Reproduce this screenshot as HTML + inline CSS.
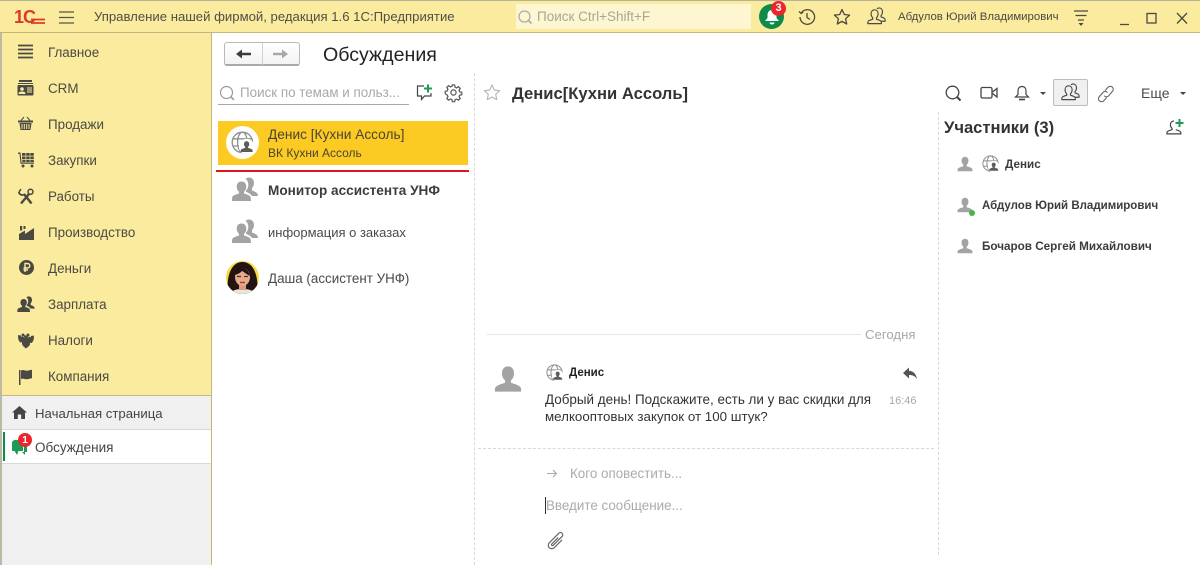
<!DOCTYPE html>
<html lang="ru"><head><meta charset="utf-8"><title>Обсуждения</title>
<style>
html,body{margin:0;padding:0;background:#fff}
#p{position:relative;width:1200px;height:565px;overflow:hidden;background:#fff;font-family:"Liberation Sans",sans-serif;color:#333}
#p div,#p svg{position:absolute}
.t{white-space:nowrap;line-height:16px;height:16px}
.m{font-size:13.4px;color:#4a4a42;left:48px}
.ms{font-size:11.7px;font-weight:bold;color:#3c3c3c}
.b{font-weight:bold}
svg{overflow:visible}
</style></head><body><div id="p">
<svg width="0" height="0" style="left:0;top:0"><defs>
<symbol id="u1" viewBox="0 0 20 20"><path d="M10 1c3 0 4.300 2.300 4.300 5 0 2.400-1 4-2.200 5v1.800c2.800.8 6 1.800 6.900 3.200.4.700.4 2 .4 3H.6c0-1 0-2.300.4-3 .9-1.400 4.100-2.400 6.900-3.200V11C6.700 10 5.700 8.400 5.700 6c0-2.700 1.300-5 4.300-5z"/></symbol>
<symbol id="uu" viewBox="0 0 26 24"><path d="M13 2.500c1-1.200 2.500-2 4-2 3.500 0 5 2.700 5 5.500 0 2.300-1 4-2 5v2.500c2 .7 4.500 1.600 5.300 3 .4.600.7 1.500.7 2.500h-6c-1.200-2-3.500-3.300-6-4.300v-1c1.500-1.500 2.300-3.500 2.300-6 0-2-.8-4.200-2.300-5.700z"/><path d="M9.500 4.500c3.300 0 4.800 2.400 4.800 5.200 0 2.300-1 4-2.300 5v1.800c2.700.8 5.500 1.800 6.300 3 .4.700.7 2.500.7 4.500H0c0-2 .1-3.800.5-4.500 1-1.200 3.800-2.200 6.500-3v-1.800c-1.300-1-2.300-2.700-2.300-5 0-2.800 1.500-5.200 4.800-5.200z"/></symbol>
<symbol id="glob" viewBox="0 0 20 20"><g fill="none" stroke="#8f8f8f" stroke-width="1.100"><circle cx="9.500" cy="9.500" r="8.500"/><ellipse cx="9.500" cy="9.500" rx="4" ry="8.500"/><path d="M1.500 6.500h16M1.500 12.500h7"/></g><circle cx="13" cy="13" r="6.500" fill="#fff"/><path d="M13 8.500c1.500 0 2.200 1.100 2.200 2.500 0 1-.5 1.800-1 2.300v.8c1.500.4 3.300 1 3.600 1.600.2.500.2 1.300.2 1.800H8c0-.5 0-1.300.2-1.800.3-.6 2.100-1.200 3.600-1.600v-.8c-.5-.5-1-1.300-1-2.300 0-1.400.7-2.500 2.200-2.500z" fill="#5c5c5c"/></symbol>
<symbol id="out" viewBox="0 0 20 20"><g fill="none" stroke="#4a4a4a" stroke-width="1.200" stroke-linejoin="round"><path d="M10.500 2c.6-.6 1.300-1 2.300-1 2.400 0 3.500 2 3.500 4.200 0 1.800-.7 3-1.500 3.800v1.500c1.700.5 3.500 1.200 4 2 .3.500.3 1.400.3 2.500h-4"/><path d="M8 3c2.500 0 3.700 2 3.700 4.300 0 1.900-.8 3.200-1.700 4v1.700c2.300.6 4.300 1.300 4.800 2.200.3.500.4 1.300.4 2.300H.8c0-1 .1-1.800.4-2.300.5-.9 2.500-1.600 4.800-2.200v-1.700c-.9-.8-1.700-2.100-1.700-4C4.300 5 5.500 3 8 3z"/></g></symbol>
</defs></svg>

<!-- Header -->
<div style="left:0;top:0;width:1200px;height:33px;background:#fbeb9e;border-top:1px solid #b5b29c;border-bottom:1px solid #c2b77b;box-sizing:border-box"></div>
<svg style="left:30px;top:18px" width="15" height="8"><path d="M1 1.500h14M1 5h14" stroke="#dd3b28" stroke-width="1.700" fill="none"/></svg>
<div class="t b" style="left:14px;top:6px;font-size:18px;line-height:22px;height:22px;color:#dd3b28;letter-spacing:-1px">1С</div>
<svg style="left:59px;top:11px" width="15" height="13"><path d="M0 1h15M0 6.500h15M0 12h15" stroke="#55554a" stroke-width="1.300"/></svg>
<div class="t" style="left:94px;top:9px;font-size:13.15px;color:#4f4f45">Управление нашей фирмой, редакция 1.6 1С:Предприятие</div>
<div style="left:516px;top:4px;width:235px;height:25px;background:#fdf6d0"></div>
<svg style="left:517px;top:9px" width="16" height="16" fill="none" stroke="#aaa" stroke-width="1.200"><circle cx="7.500" cy="7.500" r="5.500"/><path d="M11.500 11.500l3 3" stroke-width="1.600"/></svg>
<div class="t" style="left:537px;top:9px;font-size:13.5px;color:#a9a794">Поиск Ctrl+Shift+F</div>
<div style="left:759px;top:4px;width:25px;height:25px;border-radius:50%;background:#0e8a4a"></div>
<svg style="left:764px;top:9px" width="16" height="16" fill="#fff"><path d="M8 1c3 0 4.500 2.300 4.500 5v3l2.500 3H1l2.500-3V6C3.500 3.300 5 1 8 1z"/><path d="M5.500 13.500h5a2.500 2 0 0 1-5 0z"/></svg>
<div class="t b" style="left:771px;top:1px;width:15px;height:15px;border-radius:50%;background:#e8262b;color:#fff;font-size:11px;line-height:15px;text-align:center">3</div>
<svg style="left:798px;top:8px" width="18" height="18" fill="none" stroke="#4a4a42" stroke-width="1.300"><path d="M3.200 5A7.300 7.300 0 1 1 2 9"/><path d="M1 3.500l2.200 2 2-1.600"/><path d="M9 5v4.500l3 2"/></svg>
<svg style="left:833px;top:8px" width="18" height="18" fill="none" stroke="#4a4a42" stroke-width="1.300" stroke-linejoin="round"><path d="M9 1.500l2.300 5 5.300.6-4 3.600 1.100 5.300L9 13.300 4.300 16l1.100-5.300-4-3.600 5.300-.6z"/></svg>
<svg style="left:867px;top:7px" width="19" height="19"><use href="#out" width="19" height="19"/></svg>
<div class="t" style="left:898px;top:9px;font-size:11.4px;color:#4a4a42">Абдулов Юрий Владимирович</div>
<svg style="left:1073px;top:10px" width="16" height="16"><path d="M1 1h14M2.500 5.500h11M5 10h6" stroke="#4a4a42" stroke-width="1.300"/><path d="M5.500 13h5L8 16z" fill="#4a4a42"/></svg>
<svg style="left:1120px;top:12px" width="68" height="14" fill="none" stroke="#4a4a42" stroke-width="1.300"><path d="M0 12.500h9"/><rect x="27" y="1.500" width="9" height="9.500"/><path d="M57 1l10 10.500M67 1L57 11.500"/></svg>

<!-- Sidebar -->
<div style="left:0;top:33px;width:212px;height:532px;background:#fbeb9e;border-left:2px solid #bdbaa4;border-right:1px solid #c2b77b;box-sizing:border-box"></div>
<svg style="left:18px;top:44px" width="15" height="15"><path d="M0 1.500h15M0 5.500h15M0 9.500h15M0 13.500h15" stroke="#4a4a42" stroke-width="1.700"/></svg>
<div class="t m" style="top:45px">Главное</div>
<svg style="left:17px;top:79px" width="17" height="17"><path d="M2 1h13v2H2zM1 4h15v1H1z" fill="#4a4a42"/><rect x="0.500" y="6" width="16" height="10.500" rx="1" fill="#4a4a42"/><circle cx="5" cy="10" r="1.800" fill="#fbeb9e"/><path d="M2 14.500c0-2 6-2 6 0zM10 9h5M10 11h5M10 13h5" fill="#fbeb9e" stroke="#fbeb9e" stroke-width=".9"/></svg>
<div class="t m" style="top:81px">CRM</div>
<svg style="left:18px;top:116px" width="15" height="15"><path d="M0 4.500h15v2H0z" fill="#4a4a42"/><path d="M1.500 7h12l-1 7h-10z" fill="#4a4a42"/><path d="M4 8v5M6.300 8v5M8.700 8v5M11 8v5" stroke="#fbeb9e"/><path d="M3 4.500L6 1M12 4.500L9 1" stroke="#4a4a42" fill="none"/></svg>
<div class="t m" style="top:117px">Продажи</div>
<svg style="left:18px;top:152px" width="16" height="16" fill="#4a4a42"><path d="M0 .500h2.500l1 10H16v1.200H2.500L1.500 1.700H0z"/><path d="M4 1h3.500v2.700H4zM8.200 1h3.500v2.700H8.200zM12.300 1h3.500v2.700h-3.500zM4 4.500h3.500v2.700H4zM8.200 4.500h3.500v2.700H8.200zM12.300 4.500h3.500v2.700h-3.500zM4.300 8h3.200v2H4.300zM8.200 8h3.500v2H8.200zM12.300 8h3.500v2h-3.500z"/><circle cx="5" cy="14" r="1.500"/><circle cx="14" cy="14" r="1.500"/></svg>
<div class="t m" style="top:153px">Закупки</div>
<svg style="left:18px;top:188px" width="16" height="16" fill="none" stroke="#4a4a42"><path d="M3 15.500L11 6" stroke-width="2.400"/><path d="M13.500 15.500L6 6" stroke-width="2.400"/><path d="M.8 4a3.500 3.500 0 0 0 5.200 2.500" stroke-width="1.800"/><path d="M1 4l2-3" stroke-width="1.500"/><circle cx="12.500" cy="3.800" r="2.500" stroke-width="1.500"/></svg>
<div class="t m" style="top:189px">Работы</div>
<svg style="left:19px;top:225px" width="15" height="15" fill="#4a4a42"><path d="M0 15V9L6 5.500V9l9-6v12z"/><path d="M1 1h2.200v4.500H1zM4.500 1h2v3h-2z"/></svg>
<div class="t m" style="top:225px">Производство</div>
<svg style="left:19px;top:260px" width="15" height="15"><circle cx="7.500" cy="7.500" r="7.500" fill="#4a4a42"/><path d="M6 12V3.500h2.500a2.200 2.200 0 0 1 0 4.500H4.500M4.500 10H9" stroke="#fbeb9e" stroke-width="1.400" fill="none"/></svg>
<div class="t m" style="top:261px">Деньги</div>
<svg style="left:17px;top:296px" width="18" height="16"><use href="#uu" width="18" height="16" fill="#4a4a42"/></svg>
<div class="t m" style="top:297px">Зарплата</div>
<svg style="left:18px;top:332px" width="16" height="16" fill="#4a4a42"><path d="M5 1.500c.9 0 1.500.6 1.500 1.500l1 .8 1-.8c0-.9.6-1.500 1.500-1.500S11.500 2.100 11.500 3 11 4.500 10.200 4.500L9.500 6l2-1.500 1 1 .5-1.500 2.800-.5c.4 3-.2 6-2.300 7.500l-1.500-.3v2l-1.500 1.800-2.500 2-2.500-2L4 12.200v-2l-1.500.3C.4 9 -.2 6 .2 3l2.800.5.500 1.500 1-1 2 1.500-.7-1.500C5 4.500 3.500 3.900 3.500 3S4.100 1.500 5 1.500z"/></svg>
<div class="t m" style="top:333px">Налоги</div>
<svg style="left:19px;top:369px" width="14" height="16" fill="#4a4a42"><path d="M0 1h1.500v15H0z"/><path d="M2 1.500c2.500-1.200 4 .3 5.500.3S11 1 13 .8v8.500c-2 .3-3.500 1-5.500 1S4.500 9 2 10z"/></svg>
<div class="t m" style="top:369px">Компания</div>

<div style="left:2px;top:395px;width:209px;height:170px;background:#f0f0f0;border-top:1px solid #c9b877;box-sizing:border-box"></div>
<svg style="left:12px;top:406px" width="15" height="13" fill="#444"><path d="M7.500 0L15 6.500h-2V13H9.200V8.500H5.800V13H2V6.500H0z"/></svg>
<div class="t" style="left:35px;top:406px;font-size:13.2px;color:#444">Начальная страница</div>
<div style="left:2px;top:429px;width:209px;height:35px;background:#fff;border-top:1px solid #d9d9d9;border-bottom:1px solid #d9d9d9;box-sizing:border-box"></div>
<div style="left:3px;top:432px;width:2px;height:29px;background:#0e8a4a"></div>
<svg style="left:11px;top:440px" width="16" height="17" fill="#1d9a58"><path d="M3 0h9v11H7.500L6 15l-2.500-4H1V2z"/><path d="M13 5h3v7h-2v3l-3-3h2z"/></svg>
<div class="t b" style="left:18px;top:433px;width:14px;height:14px;border-radius:50%;background:#e8262b;color:#fff;font-size:10.5px;line-height:14px;text-align:center">1</div>
<div class="t" style="left:35px;top:440px;font-size:13.5px;color:#444">Обсуждения</div>

<!-- Toolbar/title -->
<div style="left:224px;top:42px;width:76px;height:24px;border:1px solid #b9b9b9;border-bottom:2px solid #a9a9a9;border-radius:3px;box-sizing:border-box;background:linear-gradient(#fff,#f3f3f3)"></div>
<div style="left:262px;top:43px;width:1px;height:22px;background:#d2d2d2"></div>
<svg style="left:236px;top:48px" width="15" height="12" fill="#3c3c3c"><path d="M15 4.700H6V1.500L0 6l6 4.500V7.300h9z"/></svg>
<svg style="left:273px;top:48px" width="15" height="12" fill="#a8a8a8"><path d="M0 4.700h9V1.500L15 6l-6 4.500V7.300H0z"/></svg>
<div class="t" style="left:323px;top:45px;font-size:19.6px;line-height:21px;height:21px;color:#222">Обсуждения</div>

<!-- List -->
<svg style="left:219px;top:85px" width="17" height="17" fill="none" stroke="#999" stroke-width="1.200"><circle cx="7.500" cy="7.500" r="6"/><path d="M11.800 11.800l3 3" stroke-width="1.600"/></svg>
<div class="t" style="left:240px;top:85px;font-size:13.4px;color:#a8a8a8">Поиск по темам и польз...</div>
<div style="left:218px;top:104px;width:191px;height:1px;background:#a8a8a8"></div>
<svg style="left:416px;top:84px" width="18" height="18"><path d="M8 2H1.500v10h4v3.500l3-3.500H15V9" fill="none" stroke="#444" stroke-width="1.200"/><path d="M12 .5v8M8 4.500h8" stroke="#1d9a58" stroke-width="2"/></svg>
<svg style="left:445px;top:84px" width="17" height="17" fill="none" stroke="#555" stroke-width="1.200"><circle cx="8.500" cy="8.500" r="2.600"/><path d="M7.300 1h2.400l.4 2.200 1.500.7 1.900-1.200 1.700 1.700-1.200 1.900.7 1.500 2.100.5v2.400l-2.100.4-.7 1.500 1.200 1.900-1.700 1.700-1.900-1.200-1.500.6-.4 2.100H7.300l-.4-2.100-1.500-.6-1.900 1.200-1.700-1.700 1.200-1.900-.7-1.500L.2 9.700V7.300l2.100-.5.7-1.500-1.200-1.900 1.700-1.700 1.900 1.200 1.500-.7z"/></svg>
<div style="left:218px;top:121px;width:250px;height:44px;background:#fbca23"></div>
<div style="left:226px;top:126px;width:33px;height:33px;border-radius:50%;background:#fff"></div>
<svg style="left:231px;top:131px" width="24" height="24"><use href="#glob" width="24" height="24"/></svg>
<div class="t" style="left:268px;top:127px;font-size:13.7px;color:#4a4433">Денис [Кухни Ассоль]</div>
<div class="t" style="left:268px;top:145px;font-size:12px;color:#4a4433">ВК Кухни Ассоль</div>
<div style="left:216px;top:170px;width:253px;height:2px;background:#e0141f"></div>
<svg style="left:232px;top:177px" width="26" height="24"><use href="#uu" width="26" height="24" fill="#a3a3a3"/></svg>
<div class="t b" style="left:268px;top:183px;font-size:13.6px;color:#3c3c3c">Монитор ассистента УНФ</div>
<svg style="left:232px;top:219px" width="26" height="24"><use href="#uu" width="26" height="24" fill="#a3a3a3"/></svg>
<div class="t" style="left:268px;top:225px;font-size:13px;color:#4a4a4a">информация о заказах</div>
<div style="left:226px;top:261px;width:33px;height:33px;border-radius:50%;overflow:hidden;background:#f6dc3c">
<svg style="left:0;top:0" width="33" height="33"><path d="M2 33C0 18 4 1 16.500 1S33 18 31 33z" fill="#231311"/><path d="M4 33c2-4 7-5 12.500-5S27 29 29 33z" fill="#e9e4dd"/><path d="M13 22h7v7h-7z" fill="#d89d80"/><ellipse cx="16.500" cy="16" rx="7.500" ry="9" fill="#e4ab8e"/><path d="M9 14c1-6 5-8 9-7 3 1 5 4 6 8-4-2-6-4-8-5-2 2-4 3-7 4z" fill="#231311"/><path d="M11 15.500h4M18 15.500h4" stroke="#503028" stroke-width="1.200"/><path d="M14 21.500h5" stroke="#b8392f" stroke-width="1.500"/></svg></div>
<div class="t" style="left:268px;top:271px;font-size:13.4px;color:#4a4a4a">Даша (ассистент УНФ)</div>

<!-- dotted separators -->
<div style="left:474px;top:73px;height:492px;width:0;border-left:1px dashed #d8d8d8"></div>
<div style="left:938px;top:112px;height:443px;width:0;border-left:1px dashed #d8d8d8"></div>

<!-- Chat header -->
<svg style="left:483px;top:84px" width="18" height="17" fill="none" stroke="#b4b4b4" stroke-width="1.100" stroke-linejoin="round"><path d="M9 1l2.300 5.100 5.400.6-4 3.600 1.100 5.300L9 13l-4.800 2.600 1.100-5.300-4-3.600 5.400-.6z"/></svg>
<div class="t b" style="left:512px;top:85px;font-size:16.6px;line-height:18px;height:18px;color:#333">Денис[Кухни Ассоль]</div>
<svg style="left:945px;top:85px" width="17" height="17" fill="none" stroke="#444" stroke-width="1.300"><circle cx="7.500" cy="7.500" r="6.300"/><path d="M12 12l3.500 3.500" stroke-width="2"/></svg>
<svg style="left:980px;top:86px" width="18" height="14" fill="none" stroke="#444" stroke-width="1.300"><rect x="1" y="1.500" width="11" height="10.500" rx="1.500"/><path d="M12.500 6l4.500-3.500v8.500L12.500 7.500"/></svg>
<svg style="left:1014px;top:85px" width="16" height="17" fill="none" stroke="#444" stroke-width="1.200"><path d="M8 1.500c2.800 0 4 2.200 4 4.500v3.500l2.500 2.500h-13L4 9.500V6c0-2.300 1.200-4.500 4-4.500z"/><path d="M5 14.500h6" stroke-width="1.600"/></svg>
<svg style="left:1040px;top:91px" width="7" height="5" fill="#444"><path d="M0 1h6L3 4z"/></svg>
<div style="left:1053px;top:79px;width:35px;height:27px;background:#f0f0f0;border:1px solid #bdbdbd;border-radius:2px;box-sizing:border-box"></div>
<svg style="left:1061px;top:83px" width="19" height="19"><use href="#out" width="19" height="19"/></svg>
<svg style="left:1098px;top:85px" width="16" height="17" fill="none" stroke="#666" stroke-width="1.100"><path d="M7 5.500l3-3.200a3 3 0 0 1 4.500 4l-4 4.700a3 3 0 0 1-4.300-.3"/><path d="M9.500 7.500a3 3 0 0 0-4.300-.3l-4 4.500a3 3 0 0 0 4.500 4l3-3.200"/></svg>
<div class="t" style="left:1141px;top:85px;font-size:14px;color:#4a4a4a">Еще</div>
<svg style="left:1180px;top:91px" width="7" height="5" fill="#444"><path d="M0 1h6L3 4z"/></svg>

<!-- Participants -->
<div class="t b" style="left:944px;top:119px;font-size:16.6px;line-height:18px;height:18px;color:#333">Участники (3)</div>
<svg style="left:1166px;top:118px" width="19" height="18"><path d="M8 3c-2.400 0-3.600 1.800-3.600 3.800 0 1.600.7 2.800 1.600 3.500v1.400c-2.200.6-4.300 1.400-4.800 2.200-.3.500-.3 1.200-.3 2h14c0-.8 0-1.500-.3-2-.5-.8-2.600-1.600-4.800-2.200" fill="none" stroke="#444" stroke-width="1.200"/><path d="M13.500 1v8M9.500 5h8" stroke="#1d9a58" stroke-width="2"/></svg>
<svg style="left:957px;top:156px" width="16" height="16"><use href="#u1" width="16" height="16" fill="#a3a3a3"/></svg>
<svg style="left:982px;top:155px" width="18" height="18"><use href="#glob" width="18" height="18"/></svg>
<div class="t ms" style="left:1005px;top:157px">Денис</div>
<svg style="left:957px;top:197px" width="16" height="16"><use href="#u1" width="16" height="16" fill="#a3a3a3"/></svg>
<div style="left:969px;top:210px;width:6px;height:6px;border-radius:50%;background:#44b649"></div>
<div class="t ms" style="left:982px;top:198px;font-size:11.5px">Абдулов Юрий Владимирович</div>
<svg style="left:957px;top:238px" width="16" height="16"><use href="#u1" width="16" height="16" fill="#a3a3a3"/></svg>
<div class="t ms" style="left:982px;top:239px">Бочаров Сергей Михайлович</div>

<!-- Messages -->
<div style="left:487px;top:334px;width:374px;height:1px;background:#e6e6e6"></div>
<div class="t" style="left:865px;top:327px;font-size:13.2px;color:#a8a8a8">Сегодня</div>
<svg style="left:494px;top:365px" width="28" height="28"><use href="#u1" width="28" height="28" fill="#a3a3a3"/></svg>
<svg style="left:546px;top:364px" width="18" height="18"><use href="#glob" width="18" height="18"/></svg>
<div class="t" style="left:569px;top:365px;font-size:11.5px;font-weight:bold;color:#222">Денис</div>
<svg style="left:903px;top:367px" width="14" height="13" fill="#555"><path d="M6 .5v3.300c4 .2 7 2.800 8 8.200-1.800-2.800-4.300-4-8-4v3.500L0 6z"/></svg>
<div class="t" style="left:545px;top:392px;font-size:13.45px;color:#333">Добрый день! Подскажите, есть ли у вас скидки для</div>
<div class="t" style="left:545px;top:409px;font-size:13.35px;color:#333">мелкооптовых закупок от 100 штук?</div>
<div class="t" style="left:889px;top:393px;font-size:11px;color:#a8a8a8">16:46</div>
<div style="left:478px;top:448px;width:456px;height:0;border-top:1px dashed #d8d8d8"></div>
<svg style="left:547px;top:469px" width="11" height="9" fill="none" stroke="#aaa" stroke-width="1.100"><path d="M0 4.500h9M6 1l3.500 3.500L6 8"/></svg>
<div class="t" style="left:570px;top:466px;font-size:13.4px;color:#ababab">Кого оповестить...</div>
<div style="left:545px;top:497px;width:1px;height:17px;background:#333"></div>
<div class="t" style="left:546px;top:498px;font-size:13.4px;color:#ababab">Введите сообщение...</div>
<svg style="left:547px;top:532px" width="18" height="18" fill="none" stroke="#666" stroke-width="1.200"><g transform="rotate(45 9 9)"><path d="M12.500 4v11a3.500 3.500 0 0 1-7 0V1.500a2.300 2.300 0 0 1 4.600 0V14a1 1 0 0 1-2 0V5"/></g></svg>
</div></body></html>
